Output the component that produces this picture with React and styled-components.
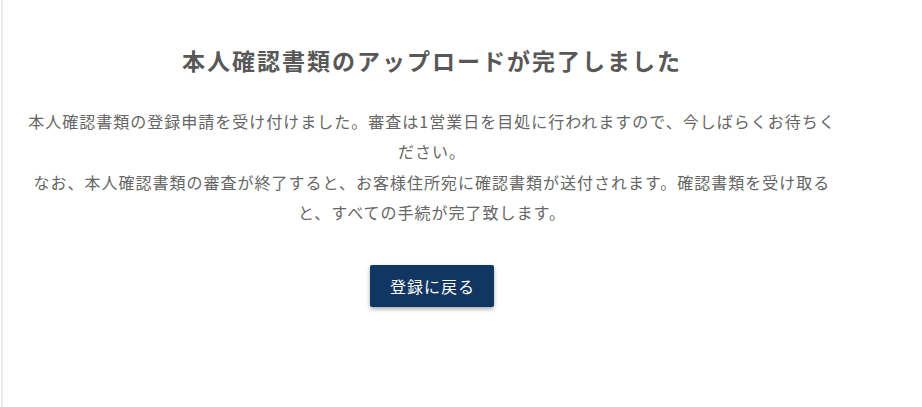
import React from "react";
import styled, { createGlobalStyle } from "styled-components";

const GlobalStyle = createGlobalStyle`
  html, body {
    margin: 0;
    padding: 0;
    background: #fff;
  }
  body {
    font-family: "Noto Sans CJK JP", "Noto Sans", "Liberation Sans", sans-serif;
  }
`;

const Page = styled.div`
  min-height: 407px;
  display: flex;
`;

const Panel = styled.main`
  margin-left: 1px;
  width: 860px;
  border-left: 2px solid #ececec;
  display: flex;
  flex-direction: column;
  align-items: center;
  padding-top: 44px;
  box-sizing: border-box;
`;

const Title = styled.h2`
  margin: 0;
  font-size: 23px;
  line-height: 33px;
  font-weight: 700;
  letter-spacing: 2px;
  color: #585858;
  text-align: center;
`;

const Message = styled.p`
  margin: 29px 0 0;
  max-width: 813px;
  font-size: 16px;
  line-height: 30.4px;
  letter-spacing: 1px;
  color: #666;
  text-align: center;
`;

const BackButton = styled.button`
  margin-top: 37px;
  height: 42px;
  padding: 0 19px 0 20px;
  border: none;
  border-radius: 2px;
  background: #113662;
  color: #fff;
  font-family: inherit;
  font-size: 16px;
  letter-spacing: 1px;
  box-shadow: 0 2px 4px rgba(0, 0, 0, 0.35);
  cursor: pointer;
`;

function App() {
  return (
    <Page>
      <GlobalStyle />
      <Panel>
        <Title>本人確認書類のアップロードが完了しました</Title>
        <Message>
          本人確認書類の登録申請を受け付けました。審査は1営業日を目処に行われますので、今しばらくお待ちください。
          <br />
          なお、本人確認書類の審査が終了すると、お客様住所宛に確認書類が送付されます。確認書類を受け取ると、すべての手続が完了致します。
        </Message>
        <BackButton>登録に戻る</BackButton>
      </Panel>
    </Page>
  );
}

export default App;
